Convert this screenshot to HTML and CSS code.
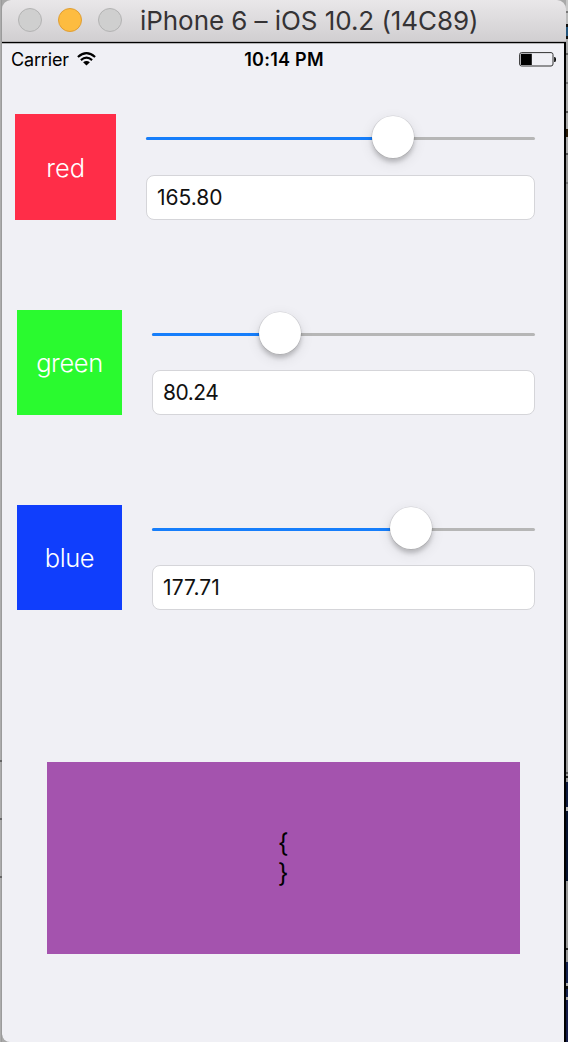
FILE: index.html
```html
<!DOCTYPE html>
<html lang="en">
<head>
<meta charset="utf-8">
<title>iPhone 6 – iOS 10.2 (14C89)</title>
<link rel="stylesheet" href="styles.css">
</head>
<body>
<div class="desktop">
  <div class="backdrop left"></div>
  <main class="window">
    <header class="titlebar">
      <span class="light"></span>
      <span class="light minimize"></span>
      <span class="light"></span>
      <h1 class="title">iPhone 6 – iOS 10.2 (14C89)</h1>
    </header>
    <section class="screen">
      <div class="statusbar">
        <div class="carrier">
          <span>Carrier</span>
          <svg class="wifi" width="19" height="14" viewBox="0 0 19 14">
            <g fill="none" stroke="#000" stroke-width="2.1">
              <path d="M.9 5Q9.5-2.8 18.1 5"/>
              <path d="M3.9 8.1Q9.5 3.2 15.1 8.1"/>
            </g>
            <path d="M6.1 10.3Q9.5 7.6 12.9 10.3L9.5 13.6Z"/>
          </svg>
        </div>
        <div class="clock">10:14 PM</div>
        <svg class="battery" width="38" height="15" viewBox="0 0 38 15">
          <rect x=".6" y=".6" width="33.4" height="13.4" rx="2" fill="none" stroke="#333" stroke-width="1"/>
          <rect x="1.8" y="1.8" width="11" height="11.2"/>
          <path d="M35.2 5h.6q1.2 0 1.2 2.5t-1.2 2.5h-.6z"/>
        </svg>
      </div>
      <div class="channel red">
        <div class="swatch"><span class="name">red</span></div>
        <div class="controls">
          <div class="slider"><div class="fill"></div><div class="thumb"></div></div>
          <div class="field"><span class="value">165.80</span></div>
        </div>
      </div>
      <div class="channel green">
        <div class="swatch"><span class="name">green</span></div>
        <div class="controls">
          <div class="slider"><div class="fill"></div><div class="thumb"></div></div>
          <div class="field"><span class="value">80.24</span></div>
        </div>
      </div>
      <div class="channel blue">
        <div class="swatch"><span class="name">blue</span></div>
        <div class="controls">
          <div class="slider"><div class="fill"></div><div class="thumb"></div></div>
          <div class="field"><span class="value">177.71</span></div>
        </div>
      </div>
      <div class="preview"><span>{</span><span>}</span></div>
    </section>
  </main>
  <div class="backdrop right"></div>
</div>
</body>
</html>
```

FILE: styles.css
```css
* { box-sizing: border-box; }
body {
  margin: 0;
  background: #a9a9a9;
  font-family: Inter, Roboto, "Liberation Sans", sans-serif;
  overflow: hidden;
}
.desktop { display: flex; width: 568px; height: 1042px; }
.backdrop { width: 2px; flex: none; }
.backdrop.left {
  background:
    linear-gradient(#666, #666) 0 760px / 2px 2px no-repeat,
    linear-gradient(#666, #666) 0 818px / 2px 2px no-repeat,
    linear-gradient(#666, #666) 0 876px / 2px 2px no-repeat,
    linear-gradient(90deg, #b5b5b5, #929292);
}
.backdrop.right {
  background: linear-gradient(#c8c8c8 0 11px, #777 11px 13px, #bbb 13px 24px, #111 24px 27px, #23567d 27px 36px, #111 36px 39px,
    #aaa 39px 53px, #666 53px 55px, #aaa 55px 82px, #777 82px 84px, #aaa 84px 111px, #555 111px 113px,
    #aaa 113px 129px, #2a1b08 129px 137px, #aaa 137px 153px, #555 153px 155px, #999 155px 182px, #777 182px 184px,
    #999 184px 772px, #555 772px 774px, #999 774px 776px, #222 776px 778px, #999 778px 782px,
    #0d1a3e 782px 807px, #bbb 807px 811px, #06132f 811px 881px, #999 881px 948px, #222 948px 950px,
    #999 950px 962px, #14224e 962px 983px, #aaa 983px 986px, #111 986px 989px, #14224e 989px 997px, #aaa 997px 1000px, #141c48 1000px);
}
.window { width: 564px; flex: none; display: flex; flex-direction: column; }
.titlebar {
  height: 42px;
  display: flex;
  align-items: center;
  padding: 0 0 2px 16px;
  gap: 16px;
  border-radius: 9px 9px 0 0;
  border-bottom: 1px solid #b1afb1;
  background: linear-gradient(#e9e7e9, #d1cfd1);
}
.light {
  width: 24px;
  height: 24px;
  flex: none;
  border-radius: 50%;
  background: #cfcfcf;
  border: 1px solid #b3b3b3;
}
.light.minimize { background: #fdbc40; border-color: #df9e35; }
.title {
  margin: 2px 0 0 2px;
  font-size: 26px;
  line-height: 36px;
  font-weight: 400;
  letter-spacing: -.06px;
  color: #353335;
  white-space: nowrap;
}
.screen {
  flex: 1;
  border-top: 1px solid #000;
  border-right: 2px solid #000;
  border-bottom-left-radius: 8px;
  background: #f0f0f5;
  box-shadow: inset 0 .5px 0 #777;
}
.statusbar {
  height: 30px;
  display: grid;
  grid-template-columns: 1fr auto 1fr;
  align-items: center;
  padding: 2px 7px 0 9px;
  font-size: 18px;
  line-height: 24px;
}
.carrier { display: flex; align-items: center; gap: 8px; letter-spacing: -.15px; }
.carrier span, .clock { padding-top: 1px; }
.clock { font-weight: 600; letter-spacing: .25px; }
.battery { justify-self: end; }
.channel { display: flex; width: 533px; }
.channel.red { margin-top: 41px; height: 106.4px; padding-left: 13.4px; gap: 30px; }
.channel.green { margin-top: 90px; height: 105px; padding-left: 15px; gap: 30px; }
.channel.blue { margin-top: 90px; height: 105px; padding-left: 15px; gap: 30px; }
.swatch {
  width: 105px;
  flex: none;
  display: flex;
  align-items: center;
  justify-content: center;
  color: #fff;
  font-size: 25.5px;
  font-weight: 300;
  letter-spacing: -.4px;
}
.red .swatch { width: 100.6px; background: #ff2d48; letter-spacing: 0; }
.green .swatch { background: #2afa2f; }
.blue .swatch { background: #103efc; }
.controls { flex: 1; display: flex; flex-direction: column; justify-content: space-between; }
.slider {
  height: 3px;
  margin-top: 22.6px;
  border-radius: 2px;
  background: #b6b6b6;
  display: flex;
  align-items: center;
}
.fill { height: 3px; border-radius: 2px 0 0 2px; background: #167efb; flex: none; }
.red .fill { width: 226px; }
.green .fill { width: 107px; }
.blue .fill { width: 237.5px; }
.thumb {
  width: 42px;
  height: 42px;
  flex: none;
  margin-bottom: 3px;
  border-radius: 50%;
  background: #fff;
  box-shadow: 0 0 0 .5px rgba(0,0,0,.12), 0 4px 4px rgba(0,0,0,.18), 0 4px 14px rgba(0,0,0,.11);
}
.field {
  height: 45px;
  border: 1px solid #d5d5d9;
  border-radius: 8px;
  background: #fff;
  padding-left: 10px;
  display: flex;
  align-items: center;
  color: #111;
  font-size: 21px;
}
.green .field { letter-spacing: -.5px; }
.blue .field { letter-spacing: .1px; }
.preview {
  width: 472.5px;
  height: 192px;
  margin: 151.6px 0 0 45px;
  background: #a453ae;
  display: flex;
  flex-direction: column;
  align-items: center;
  justify-content: center;
  font-size: 25.5px;
  line-height: 30px;
}
```
